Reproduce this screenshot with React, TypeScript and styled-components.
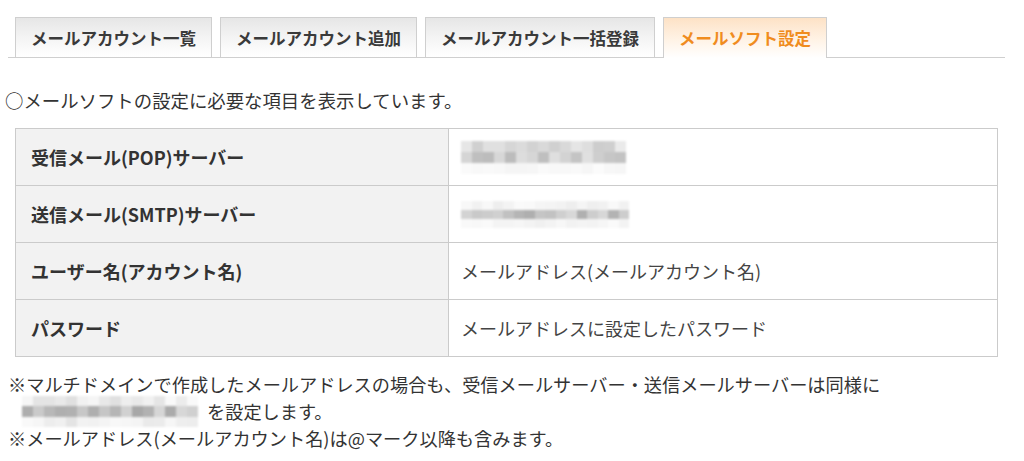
import React from 'react';
import styled, { createGlobalStyle } from 'styled-components';

const GlobalStyle = createGlobalStyle`
  html, body {
    margin: 0;
    padding: 0;
    background: #ffffff;
  }
  body {
    font-family: "Noto Sans CJK JP", "Noto Sans", sans-serif;
    color: #333333;
  }
`;

const Page = styled.div`
  width: 997px;
  padding: 17px 0 0 8px;
`;

const TabBar = styled.div`
  display: flex;
  gap: 8px;
  padding-left: 7px;
  border-bottom: 1px solid #cfcfcf;
`;

const Tab = styled.div<{ $active?: boolean }>`
  height: 39px;
  padding: 0 15px;
  display: flex;
  align-items: center;
  border: 1px solid #cfcfcf;
  border-bottom: none;
  margin-bottom: ${(p) => (p.$active ? '-1px' : '0')};
  padding-bottom: ${(p) => (p.$active ? '1px' : '0')};
  background: ${(p) =>
    p.$active
      ? 'linear-gradient(to bottom, #fde2c6 0%, #fff3e6 55%, #ffffff 100%)'
      : 'linear-gradient(to bottom, #e6e6e6 0%, #f4f4f4 50%, #ffffff 100%)'};
  color: ${(p) => (p.$active ? '#f08c1e' : '#3a3a3a')};
  font-size: 16.5px;
  font-weight: bold;
  white-space: nowrap;
`;

const Intro = styled.p`
  margin: 29px 0 0 -3px;
  font-size: 18.4px;
  line-height: 27px;
`;

const Table = styled.table`
  margin: 14px 0 0 7px;
  width: 983px;
  border-collapse: collapse;
  border: 1px solid #cbcbcb;
`;

const Row = styled.tr`
  height: 57px;
  border-bottom: 1px solid #cbcbcb;
`;

const Label = styled.th`
  width: 417px;
  padding: 0 0 0 15px;
  background: #f2f2f2;
  border-right: 1px solid #cbcbcb;
  text-align: left;
  font-size: 18px;
  font-weight: bold;
  color: #333333;
`;

const Value = styled.td`
  padding: 0 0 0 12px;
  font-size: 18px;
  color: #444444;
`;

const Notes = styled.div`
  margin: 14px 0 0 0;
  font-size: 18.2px;
  line-height: 27px;
`;

const NoteLine = styled.div`
  display: flex;
  align-items: center;
  height: 27px;
`;

const MosaicGrid = styled.div<{ $cols: number; $cell: number; $rowH: number }>`
  display: grid;
  grid-template-columns: repeat(${(p) => p.$cols}, ${(p) => p.$cell}px);
  grid-auto-rows: ${(p) => p.$rowH}px;
  filter: blur(0.8px);
  flex-shrink: 0;
`;

const InlineMosaic = styled.span`
  display: inline-flex;
  margin: 0 9px 0 14px;
`;

const shadeFor = (seed: number, i: number, base: number, spread: number) => {
  const v = Math.abs(Math.sin(seed * 97.13 + i * 12.9898) * 43758.5453) % 1;
  return Math.round(base + v * spread);
};

const Mosaic = ({
  cols,
  rows,
  cell,
  rowH,
  seed,
}: {
  cols: number;
  rows: { base: number; spread: number }[];
  cell: number;
  rowH: number;
  seed: number;
}) => {
  const cells: React.ReactNode[] = [];
  rows.forEach((r, ri) => {
    for (let c = 0; c < cols; c++) {
      const g = Math.min(255, shadeFor(seed, ri * cols + c, r.base, r.spread));
      cells.push(<span key={ri + '-' + c} style={{ background: `rgb(${g},${g},${g})` }} />);
    }
  });
  return (
    <MosaicGrid $cols={cols} $cell={cell} $rowH={rowH}>
      {cells}
    </MosaicGrid>
  );
};

const tabs = ['メールアカウント一覧', 'メールアカウント追加', 'メールアカウント一括登録', 'メールソフト設定'];

const App = () => {
  return (
    <Page>
      <GlobalStyle />
      <TabBar>
        {tabs.map((t, i) => (
          <Tab key={t} $active={i === 3}>
            {t}
          </Tab>
        ))}
      </TabBar>

      <Intro>○メールソフトの設定に必要な項目を表示しています。</Intro>

      <Table>
        <tbody>
          <Row>
            <Label>受信メール(POP)サーバー</Label>
            <Value>
              <Mosaic
                cols={15}
                cell={11}
                rowH={11}
                seed={3}
                rows={[
                  { base: 200, spread: 35 },
                  { base: 185, spread: 40 },
                  { base: 244, spread: 8 },
                ]}
              />
            </Value>
          </Row>
          <Row>
            <Label>送信メール(SMTP)サーバー</Label>
            <Value>
              <Mosaic
                cols={16}
                cell={10.5}
                rowH={9}
                seed={7}
                rows={[
                  { base: 236, spread: 15 },
                  { base: 170, spread: 50 },
                  { base: 240, spread: 12 },
                ]}
              />
            </Value>
          </Row>
          <Row>
            <Label>ユーザー名(アカウント名)</Label>
            <Value>メールアドレス(メールアカウント名)</Value>
          </Row>
          <Row>
            <Label>パスワード</Label>
            <Value>メールアドレスに設定したパスワード</Value>
          </Row>
        </tbody>
      </Table>

      <Notes>
        <NoteLine>
          ※マルチドメインで作成したメールアドレスの場合も、受信メールサーバー・送信メールサーバーは同様に
        </NoteLine>
        <NoteLine>
          <InlineMosaic>
            <Mosaic
              cols={16}
              cell={11}
              rowH={10.5}
              seed={11}
              rows={[
                { base: 222, spread: 28 },
                { base: 165, spread: 55 },
                { base: 225, spread: 25 },
              ]}
            />
          </InlineMosaic>
          を設定します。
        </NoteLine>
        <NoteLine>※メールアドレス(メールアカウント名)は@マーク以降も含みます。</NoteLine>
      </Notes>
    </Page>
  );
};

export default App;
